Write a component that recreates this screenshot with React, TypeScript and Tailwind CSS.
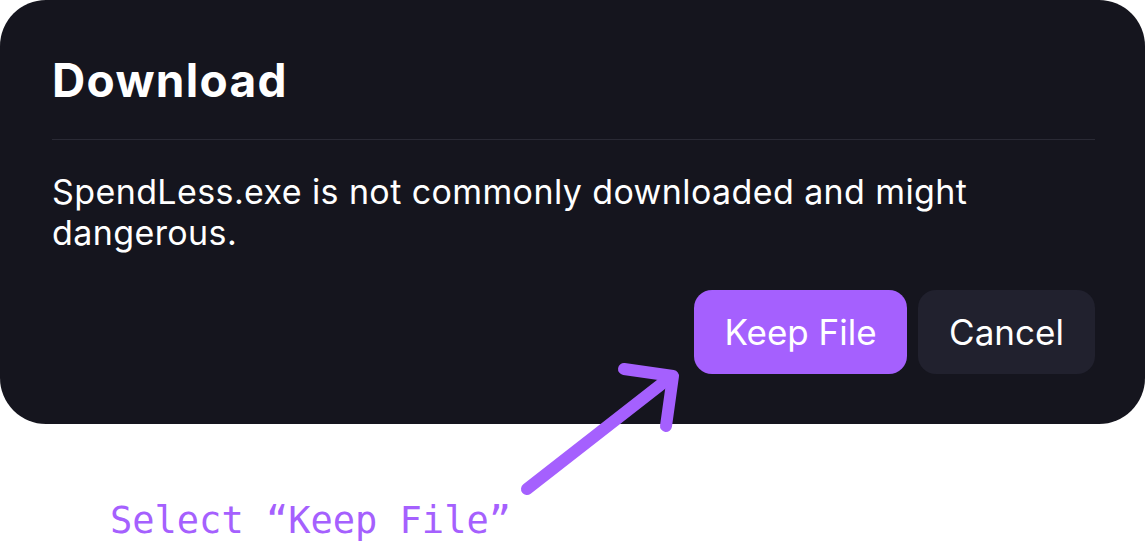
export default function App() {
  return (
    <div className="relative w-[1145px] h-[545px] bg-white overflow-hidden" style={{ fontFamily: 'Inter, "Noto Sans", sans-serif' }}>
      <div className="w-[1145px] h-[424px] bg-[#15151e] rounded-[46px] pl-[52px] pr-[50px] pt-[54px] flex flex-col">
        <h1 className="text-[46px] leading-[52px] font-bold text-white tracking-[1.3px]">Download</h1>
        <div className="mt-[33px] h-px bg-[#2a2a35]" />
        <p className="mt-[31px] text-[34px] leading-[41px] text-white tracking-[0.4px] pr-[60px]">
          SpendLess.exe is not commonly downloaded and might dangerous.
        </p>
        <div className="mt-[37px] flex justify-end gap-[11px]">
          <button className="h-[84px] w-[213px] rounded-[18px] bg-[#a560fe] text-white text-[35px]">Keep File</button>
          <button className="h-[84px] w-[177px] rounded-[18px] bg-[#21212e] text-white text-[35px]">Cancel</button>
        </div>
      </div>
      <svg className="absolute left-0 top-0" width="1145" height="545" viewBox="0 0 1145 545" fill="none">
        <path d="M527 489 L668 379" stroke="#a560fe" strokeWidth="12" strokeLinecap="round" />
        <path d="M624 369 L673 376 L666 426" stroke="#a560fe" strokeWidth="12" strokeLinecap="round" strokeLinejoin="round" />
      </svg>
      <div className="absolute left-[110px] top-[499px] text-[37px] leading-[44px] text-[#a560fe]" style={{ fontFamily: '"DejaVu Sans Mono", monospace' }}>
        Select “Keep File”
      </div>
    </div>
  );
}
